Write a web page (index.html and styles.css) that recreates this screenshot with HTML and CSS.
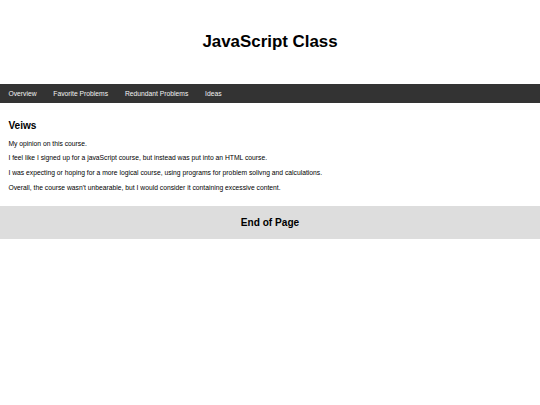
FILE: index.html
```html
<!DOCTYPE html>
<html lang="en">
<head>
<meta charset="utf-8">
<title>JavaScript Class</title>
<link rel="stylesheet" href="styles.css">
</head>
<body>
<header class="header">
  <h1 class="title">JavaScript Class</h1>
</header>
<nav class="topnav">
  <a href="#" class="nav-link">Overview</a>
  <a href="#" class="nav-link">Favorite Problems</a>
  <a href="#" class="nav-link">Redundant Problems</a>
  <a href="#" class="nav-link">Ideas</a>
</nav>
<main class="content">
  <h2 class="section-title">Veiws</h2>
  <p class="text">My opinion on this course.</p>
  <p class="text">I feel like I signed up for a javaScript course, but instead was put into an HTML course.</p>
  <p class="text">I was expecting or hoping for a more logical course, using programs for problem solivng and calculations.</p>
  <p class="text">Overall, the course wasn't unbearable, but I would consider it containing excessive content.</p>
</main>
<footer class="footer">
  <h2 class="footer-title">End of Page</h2>
</footer>
</body>
</html>
```
FILE: styles.css
```css
html, body {
  margin: 0;
  padding: 0;
  background: #ffffff;
}
body {
  font-family: "Liberation Sans", Arial, sans-serif;
  color: #000;
}
.header {
  padding: 21.1px;
  text-align: center;
  background: #fff;
}
.title {
  font-size: 16.9px;
  line-height: 19.4px;
  font-weight: bold;
  margin: 11.3px 0;
}
.topnav {
  display: flex;
  background: #333333;
}
.nav-link {
  display: block;
  color: #f2f2f2;
  text-decoration: none;
  font-size: 6.75px;
  line-height: 7.76px;
  padding: 5.6px 8.4px;
}
.content {
  padding: 8.4px;
}
.section-title {
  font-size: 10.125px;
  line-height: 11.64px;
  font-weight: bold;
  margin: 8.4px 0;
}
.text {
  font-size: 6.75px;
  line-height: 7.76px;
  margin: 6.75px 0;
}
.footer {
  background: #dddddd;
  text-align: center;
  padding: 10.7px;
}
.footer-title {
  font-size: 10.125px;
  line-height: 11.64px;
  font-weight: bold;
  margin: 0;
}
```
